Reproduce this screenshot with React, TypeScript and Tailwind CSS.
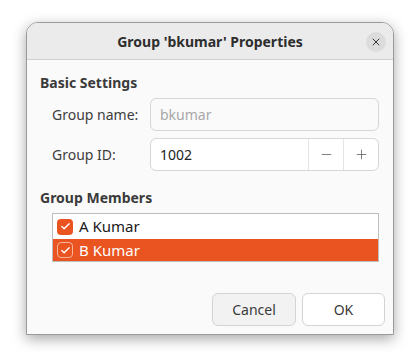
import { X, Minus, Plus, Check } from 'lucide-react';

function Member({ name, selected }: { name: string; selected?: boolean }) {
    return (
        <div className={`flex items-center gap-[6px] pl-[4px] ${selected ? 'h-[22px] bg-[#e95420] text-white' : 'h-[25px] bg-white text-[#1a1a1a]'}`}>
            <span className={`flex h-[16px] w-[16px] items-center justify-center rounded-[4px] bg-[#e95420] ${selected ? 'border border-[#f6b49a]' : ''}`}>
                <Check size={11} strokeWidth={3} className="text-white" />
            </span>
            <span className="text-[15px] leading-none">{name}</span>
        </div>
    );
}

export default function App() {
    return (
        <div className="h-[364px] w-[420px] bg-white pl-[26px] pt-[22px]" style={{ fontFamily: '"Noto Sans", "DejaVu Sans", sans-serif' }}>
            <div className="flex h-[313px] w-[368px] flex-col overflow-hidden rounded-t-[12px] border border-[#9a9a9a] bg-[#fafafa] shadow-[0_4px_14px_rgba(0,0,0,0.35)]">
                <div className="relative flex h-[37px] shrink-0 items-center justify-center border-b border-[#cfcfcf] bg-[#ebebeb]">
                    <span className="text-[14px] font-bold text-[#2e2e2e]">Group 'bkumar' Properties</span>
                    <button className="absolute right-[7px] top-[9px] flex h-[20px] w-[20px] items-center justify-center rounded-full bg-[#dcdcdc] text-[#333]">
                        <X size={12} strokeWidth={2} />
                    </button>
                </div>
                <div className="flex flex-1 flex-col pl-[13px] pr-[14px] text-[#333]">
                    <div className="mt-[14px] text-[14px] font-bold leading-[18px] text-[#3a3a3a]">Basic Settings</div>
                    <div className="mt-[6px] flex flex-col gap-[7px] pl-[12px]">
                        <div className="flex items-center">
                            <span className="w-[98px] text-[14px] text-[#3d3d3d]">Group name:</span>
                            <div className="flex h-[33px] flex-1 items-center rounded-[6px] border border-[#d6d6d6] bg-[#fafafa] pl-[9px] text-[14px] text-[#a8a8a8]">bkumar</div>
                        </div>
                        <div className="flex items-center">
                            <span className="w-[98px] text-[14px] text-[#3d3d3d]">Group ID:</span>
                            <div className="flex h-[33px] flex-1 items-stretch rounded-[6px] border border-[#d6d6d6] bg-white text-[14px]">
                                <span className="flex flex-1 items-center pl-[9px] text-[#222]">1002</span>
                                <span className="flex w-[35px] items-center justify-center border-l border-[#e4e4e4] text-[#555]"><Minus size={15} strokeWidth={1.2} /></span>
                                <span className="flex w-[35px] items-center justify-center border-l border-[#e4e4e4] text-[#555]"><Plus size={15} strokeWidth={1.2} /></span>
                            </div>
                        </div>
                    </div>
                    <div className="mt-[18px] text-[14px] font-bold leading-[18px] text-[#3a3a3a]">Group Members</div>
                    <div className="ml-[12px] mt-[6px] flex flex-col border border-[#bdbdbd] bg-white">
                        <Member name="A Kumar" />
                        <Member name="B Kumar" selected />
                    </div>
                    <div className="-mr-[6px] mt-auto mb-[8px] flex justify-end gap-[6px]">
                        <button className="h-[33px] w-[84px] rounded-[6px] border border-[#d4d4d4] bg-[#f2f2f2] text-[14px] text-[#3a3a3a]">Cancel</button>
                        <button className="h-[33px] w-[83px] rounded-[6px] border border-[#d4d4d4] bg-white text-[14px] text-[#3a3a3a]">OK</button>
                    </div>
                </div>
            </div>
        </div>
    );
}
